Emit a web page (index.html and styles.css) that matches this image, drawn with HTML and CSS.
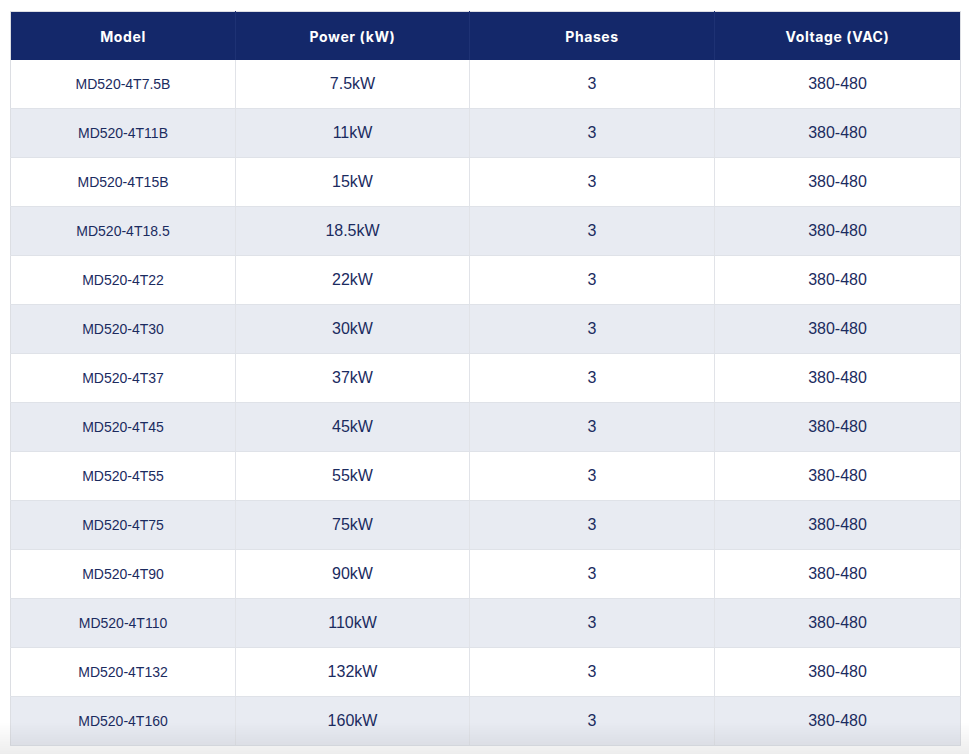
FILE: index.html
```html
<!DOCTYPE html>
<html lang="en">
<head>
<meta charset="utf-8">
<title>MD520 Models</title>
<link rel="stylesheet" href="styles.css">
</head>
<body>
<div class="wrap">
<table class="spec">
<colgroup>
<col class="c1"><col class="c2"><col class="c3"><col class="c4">
</colgroup>
<thead>
<tr><th>Model</th><th>Power (kW)</th><th>Phases</th><th>Voltage (VAC)</th></tr>
</thead>
<tbody>
<tr><td class="model">MD520-4T7.5B</td><td>7.5kW</td><td>3</td><td>380-480</td></tr>
<tr><td class="model">MD520-4T11B</td><td>11kW</td><td>3</td><td>380-480</td></tr>
<tr><td class="model">MD520-4T15B</td><td>15kW</td><td>3</td><td>380-480</td></tr>
<tr><td class="model">MD520-4T18.5</td><td>18.5kW</td><td>3</td><td>380-480</td></tr>
<tr><td class="model">MD520-4T22</td><td>22kW</td><td>3</td><td>380-480</td></tr>
<tr><td class="model">MD520-4T30</td><td>30kW</td><td>3</td><td>380-480</td></tr>
<tr><td class="model">MD520-4T37</td><td>37kW</td><td>3</td><td>380-480</td></tr>
<tr><td class="model">MD520-4T45</td><td>45kW</td><td>3</td><td>380-480</td></tr>
<tr><td class="model">MD520-4T55</td><td>55kW</td><td>3</td><td>380-480</td></tr>
<tr><td class="model">MD520-4T75</td><td>75kW</td><td>3</td><td>380-480</td></tr>
<tr><td class="model">MD520-4T90</td><td>90kW</td><td>3</td><td>380-480</td></tr>
<tr><td class="model">MD520-4T110</td><td>110kW</td><td>3</td><td>380-480</td></tr>
<tr><td class="model">MD520-4T132</td><td>132kW</td><td>3</td><td>380-480</td></tr>
<tr><td class="model">MD520-4T160</td><td>160kW</td><td>3</td><td>380-480</td></tr>
</tbody>
</table>
</div>
<div class="fade"></div>
</body>
</html>
```
FILE: styles.css
```css
html, body {
  margin: 0;
  padding: 0;
  background: #ffffff;
}
.wrap {
  padding: 11px 9px 0 10px;
}
.spec {
  width: 950px;
  border-collapse: collapse;
  table-layout: fixed;
  border: 1px solid #dcdee3;
  font-family: "Liberation Sans", Arial, sans-serif;
  color: #1b2b5f;
}
.c1 { width: 225px; }
.c2 { width: 234px; }
.c3 { width: 245px; }
.c4 { width: 246px; }
.spec th {
  background: #14286a;
  color: #ffffff;
  font-family: Inter, "Open Sans", sans-serif;
  font-weight: 700;
  font-size: 14px;
  letter-spacing: 0.6px;
  height: 48px;
  padding: 0;
  text-align: center;
  border-left: 1px solid #1e3274;
}
.spec th:first-child { border-left: none; }
.spec td {
  height: 48px;
  padding: 0;
  text-align: center;
  font-size: 16px;
  border-left: 1px solid #e1e3e8;
  border-bottom: 1px solid #dfe2e8;
}
.spec td:first-child { border-left: none; }
.spec td.model { font-size: 14px; }
.spec tbody tr:nth-child(even) td {
  background: #e8ebf2;
}
.fade {
  position: fixed;
  left: 0;
  right: 0;
  bottom: 0;
  height: 32px;
  background: linear-gradient(to bottom, rgba(0,0,0,0), rgba(0,0,0,0.07));
  pointer-events: none;
}
```
